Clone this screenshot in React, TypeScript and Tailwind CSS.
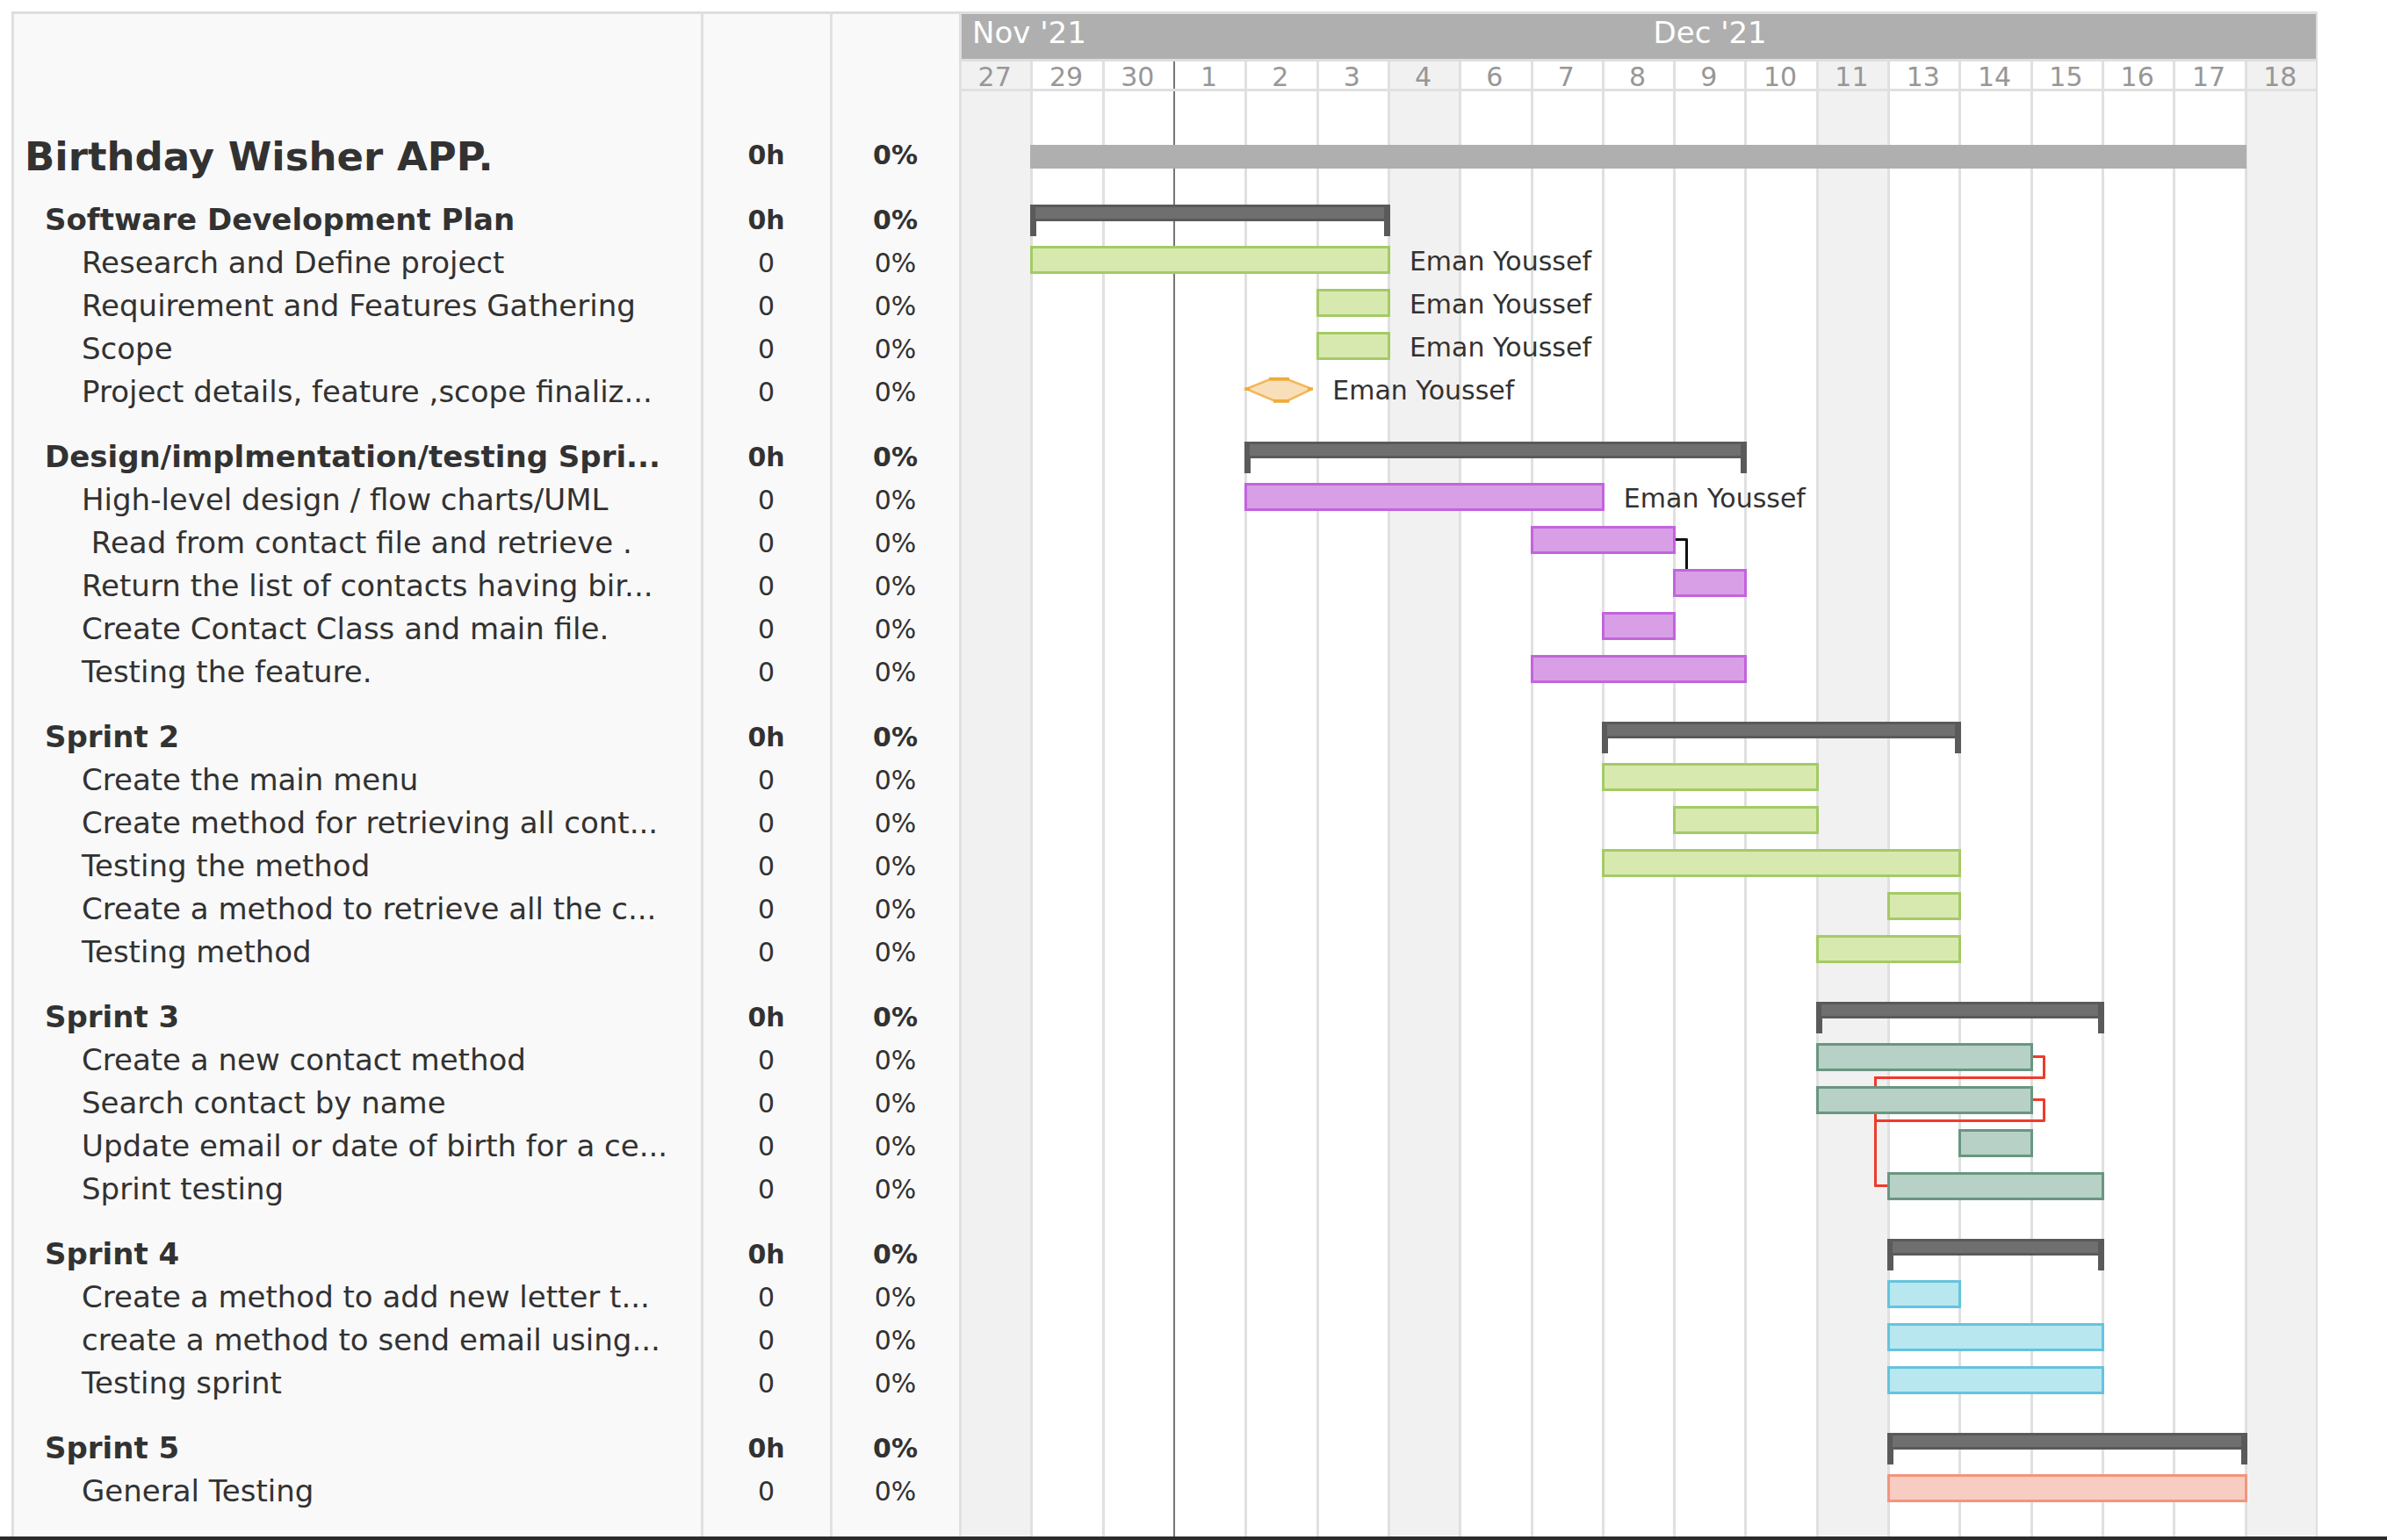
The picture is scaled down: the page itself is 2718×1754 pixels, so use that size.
import React from "react";

type Tone = "green" | "purple" | "teal" | "blue" | "salmon";

type Task = {
  name: string;
  start: number;
  span: number;
  assignee?: string;
  milestone?: boolean;
  link?: "next" | "long" | "short";
};

type Group = { name: string; start: number; span: number; tone: Tone; tasks: Task[] };

const tones: Record<Tone, string> = {
  green: "bg-[#d7e9af] border-[#a4ca66]",
  purple: "bg-[#d89fe6] border-[#c364dd]",
  teal: "bg-[#b7d1c6] border-[#6a9681]",
  blue: "bg-[#b8e7ef] border-[#66c3dd]",
  salmon: "bg-[#f7ccc1] border-[#f2957e]",
};

const days = [27, 29, 30, 1, 2, 3, 4, 6, 7, 8, 9, 10, 11, 13, 14, 15, 16, 17, 18];
const shaded = [27, 4, 11, 18];
const COLUMNS = "grid grid-cols-[repeat(19,minmax(0,1fr))]";

const groups: Group[] = [
  {
    name: "Software Development Plan",
    start: 2,
    span: 5,
    tone: "green",
    tasks: [
      { name: "Research and Define project", start: 2, span: 5, assignee: "Eman Youssef" },
      { name: "Requirement and Features Gathering", start: 6, span: 1, assignee: "Eman Youssef" },
      { name: "Scope", start: 6, span: 1, assignee: "Eman Youssef" },
      { name: "Project details, feature ,scope finaliz...", start: 5, span: 1, assignee: "Eman Youssef", milestone: true },
    ],
  },
  {
    name: "Design/implmentation/testing Spri...",
    start: 5,
    span: 7,
    tone: "purple",
    tasks: [
      { name: "High-level design / flow charts/UML", start: 5, span: 5, assignee: "Eman Youssef" },
      { name: " Read from contact file and retrieve .", start: 9, span: 2, link: "next" },
      { name: "Return the list of contacts having bir...", start: 11, span: 1 },
      { name: "Create Contact Class and main file.", start: 10, span: 1 },
      { name: "Testing the feature.", start: 9, span: 3 },
    ],
  },
  {
    name: "Sprint 2",
    start: 10,
    span: 5,
    tone: "green",
    tasks: [
      { name: "Create the main menu", start: 10, span: 3 },
      { name: "Create method for retrieving all cont...", start: 11, span: 2 },
      { name: "Testing the method", start: 10, span: 5 },
      { name: "Create a method to retrieve all the c...", start: 14, span: 1 },
      { name: "Testing method", start: 13, span: 2 },
    ],
  },
  {
    name: "Sprint 3",
    start: 13,
    span: 4,
    tone: "teal",
    tasks: [
      { name: "Create a new contact method", start: 13, span: 3, link: "long" },
      { name: "Search contact by name", start: 13, span: 3, link: "short" },
      { name: "Update email or date of birth for a ce...", start: 15, span: 1 },
      { name: "Sprint testing", start: 14, span: 3 },
    ],
  },
  {
    name: "Sprint 4",
    start: 14,
    span: 3,
    tone: "blue",
    tasks: [
      { name: "Create a method to add new letter t...", start: 14, span: 1 },
      { name: "create a method to send email using...", start: 14, span: 3 },
      { name: "Testing sprint", start: 14, span: 3 },
    ],
  },
  {
    name: "Sprint 5",
    start: 14,
    span: 5,
    tone: "salmon",
    tasks: [{ name: "General Testing", start: 14, span: 5 }],
  },
];

const at = (start: number, span: number) => ({ gridColumn: `${start} / span ${span}` });

function TaskTable() {
  return (
    <table className="w-[1079px] shrink-0 table-fixed border-collapse self-start">
      <colgroup>
        <col />
        <col className="w-[147px]" />
        <col className="w-[147px]" />
      </colgroup>
      <tbody>
        <tr className="h-[185px] align-bottom">
          <th scope="row" className="p-0 pl-[15px] text-left text-[45px] leading-[44px] font-bold whitespace-pre">Birthday Wisher APP.</th>
          <td className="p-0 pl-0.5 text-center text-[30px] leading-[49px] font-bold">0h</td>
          <td className="p-0 pl-0.5 text-center text-[30px] leading-[49px] font-bold">0%</td>
        </tr>
        {groups.map((g) => (
          <React.Fragment key={g.name}>
            <tr className="h-[74px] align-bottom">
              <th scope="row" className="p-0 pl-[38px] text-left text-[34px] leading-[49px] font-bold whitespace-pre">{g.name}</th>
              <td className="p-0 pl-0.5 text-center text-[30px] leading-[49px] font-bold">0h</td>
              <td className="p-0 pl-0.5 text-center text-[30px] leading-[49px] font-bold">0%</td>
            </tr>
            {g.tasks.map((t) => (
              <tr key={t.name} className="h-[49px]">
                <th scope="row" className="p-0 pl-20 text-left text-[34px] leading-[49px] font-normal whitespace-pre">{t.name}</th>
                <td className="p-0 pl-0.5 text-center text-[30px] leading-[49px]">0</td>
                <td className="p-0 pl-0.5 text-center text-[30px] leading-[49px]">0%</td>
              </tr>
            ))}
          </React.Fragment>
        ))}
      </tbody>
    </table>
  );
}

function Assignee({ name }: { name: string }) {
  return <span className="absolute top-0 left-full ml-[22px] text-[30px] leading-9 whitespace-nowrap">{name}</span>;
}

function Bar({ task, tone }: { task: Task; tone: Tone }) {
  if (task.milestone) {
    return (
      <div className="relative h-8 w-[78px]" style={at(task.start, task.span)}>
        <svg viewBox="0 0 78 32" className="h-8 w-[78px]" aria-hidden="true">
          <path d="M2 16 L28 5.5 H50 L77 16 L50 29 H33 Z" fill="#f9dfb9" stroke="#f3b75c" strokeWidth="2.5" />
          <path d="M28 4.5 H51 M33 30 H51 M0 16 H6 M72 16 H78" fill="none" stroke="#f0ab3c" strokeWidth="3.5" />
        </svg>
        {task.assignee && <Assignee name={task.assignee} />}
      </div>
    );
  }
  return (
    <div className="relative -mr-[3px] h-8" style={at(task.start, task.span)}>
      {task.link === "next" && (
        <div className="absolute top-[14px] left-full h-[35px] w-[14px] rounded-tr-xs border-t-3 border-r-3 border-[#111111]" />
      )}
      {(task.link === "long" || task.link === "short") && (
        <>
          <div className="absolute top-[14px] left-full h-[27px] w-[14px] rounded-r-xs border-3 border-l-0 border-[#ee3b2b]" />
          <div
            className="absolute top-[38px] right-0 h-[3px] bg-[#ee3b2b]"
            style={{ left: `calc(${100 / task.span}% - 16px)` }}
          />
          <div
            className={
              "absolute top-[38px] w-4 rounded-l-xs border-b-3 border-l-3 border-[#ee3b2b] " +
              (task.link === "long" ? "h-[126px]" : "h-[77px]")
            }
            style={{ left: `calc(${100 / task.span}% - 16px)` }}
          />
        </>
      )}
      <div className={"relative h-8 border-3 " + tones[tone]} />
      {task.assignee && <Assignee name={task.assignee} />}
    </div>
  );
}

function Chart() {
  return (
    <div className="flex min-w-0 flex-1 flex-col border-r-2 border-[#dedede]">
      <div className={COLUMNS + " h-[54px] border-b-3 border-l-3 border-[#dedede] bg-[#afafaf] text-[34px] leading-[43px] text-white"}>
        <span className="col-span-3 pl-3">Nov '21</span>
        <span className="col-span-15 text-center">Dec '21</span>
      </div>
      <div className="relative flex-1">
        <div className={COLUMNS + " absolute inset-0"}>
          {days.map((d) => (
            <div
              key={d}
              className={
                (d === 1 ? "border-l-2 border-[#757575] " : "border-l-3 border-[#e0e0e0] ") +
                (shaded.includes(d) ? "bg-[#f1f1f1]" : "bg-white")
              }
            />
          ))}
        </div>
        <div className="relative">
          <div className={COLUMNS + " h-[34px] border-b-3 border-[#e0e0e0] text-center text-[30px] leading-9 text-[#979797]"}>
            {days.map((d) => (
              <span key={d}>{d}</span>
            ))}
          </div>
          <div className={COLUMNS + " h-[93px] pt-[61px]"}>
            <div className="-mr-0.5 h-[27px] bg-[#afafaf]" style={at(2, 17)} />
          </div>
          {groups.map((g) => (
            <React.Fragment key={g.name}>
              <div className={COLUMNS + " h-[74px] pt-9"}>
                <div className="-mr-[3px] flex h-9 justify-between" style={at(g.start, g.span)}>
                  <div className="w-[7px] shrink-0 bg-[#5a5a5a]" />
                  <div className="-mx-1 h-[19px] flex-1 border-3 border-[#5a5a5a] bg-[#6f6f6f]" />
                  <div className="w-[7px] shrink-0 bg-[#5a5a5a]" />
                </div>
              </div>
              {g.tasks.map((t) => (
                <div key={t.name} className={COLUMNS + " h-[49px] pt-[9px]"}>
                  <Bar task={t} tone={g.tone} />
                </div>
              ))}
            </React.Fragment>
          ))}
        </div>
      </div>
    </div>
  );
}

export default function App() {
  return (
    <main className="flex min-h-screen flex-col border-b-4 border-[#2b2b2b] bg-white pt-[13px] font-['DejaVu_Sans',sans-serif] text-[#323232]">
      <div className="mr-[79px] ml-[13px] flex flex-1 border-t-3 border-[#dedede]">
        <div className="relative flex shrink-0 bg-[#f9f9f9]">
          <div className="absolute inset-0 grid grid-cols-[1fr_147px_147px]">
            <div className="border-l-3 border-[#e0e0e0]" />
            <div className="border-l-3 border-[#e0e0e0]" />
            <div className="border-l-3 border-[#e0e0e0]" />
          </div>
          <div className="relative">
            <TaskTable />
          </div>
        </div>
        <Chart />
      </div>
    </main>
  );
}
